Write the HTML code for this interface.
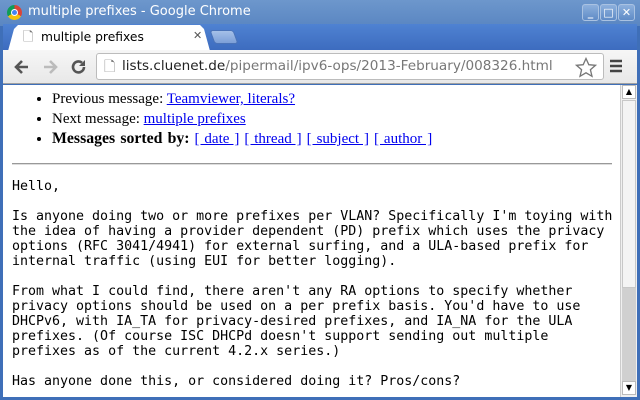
<!DOCTYPE html>
<html><head><style>
*{margin:0;padding:0;box-sizing:border-box}
body{width:640px;height:400px;overflow:hidden;background:#3f6fb8;position:relative;font-family:"DejaVu Sans","Liberation Sans",sans-serif}
.title{position:absolute;left:0;top:0;width:640px;height:26px;background:linear-gradient(#6d97cc,#5a86c2);}
.title span{position:absolute;left:28px;top:4px;color:#fff;font-size:13px}
.logo{position:absolute;left:7px;top:5px;width:15px;height:15px;border-radius:50%;background:conic-gradient(#db4437 0 120deg,#f4c20d 120deg 240deg,#0f9d58 240deg 360deg)}
.logo:after{content:"";position:absolute;left:4px;top:4px;width:7px;height:7px;border-radius:50%;background:#4285f4;border:1px solid #fff;box-sizing:border-box}
.wb{position:absolute;top:4px;width:17px;height:17px;border:1px solid #a9c2e2;border-radius:3px;background:linear-gradient(#8db0dd,#5f8bc6);color:#fff;font-size:11px;text-align:center;line-height:15px;font-weight:bold}
.strip{position:absolute;left:3px;top:24px;width:634px;height:26px;background:linear-gradient(#4f82d2,#3d6cbf)}
.tab{position:absolute;left:8px;top:25px;width:202px;height:26px;background:#fff;border-radius:4px 4px 0 0;clip-path:polygon(0 100%,6px 4px,10px 0,192px 0,196px 4px,202px 100%)}
.tab span{position:absolute;left:33px;top:5px;font-size:12.3px;color:#000}
.tab .x{left:185px;top:4px;font-size:11px;color:#555;font-weight:bold}
.newtab{position:absolute;left:212px;top:30px;width:24px;height:14px;background:linear-gradient(#a5c0e8,#7c9fd8);border:1px solid #4a73b8;border-radius:3px;transform:skewX(20deg)}
.tool{position:absolute;left:3px;top:50px;width:634px;height:34px;background:linear-gradient(#f6f6f6,#e8e8e8);border-bottom:1px solid #a0a0a0}
.omni{position:absolute;left:96px;top:53px;width:508px;height:27px;background:#fff;border:1px solid #bcbcbc;border-radius:3px}
.omni span{position:absolute;left:25px;top:4px;font-size:13.6px;color:#222;white-space:nowrap}
.omni span i{font-style:normal;color:#777}
.content{position:absolute;left:3px;top:85px;width:617px;height:312px;background:#fff;overflow:hidden}
ul{position:absolute;left:33px;top:4px;font-family:"Liberation Serif",serif;font-size:15px;line-height:20px;list-style:disc;padding-left:16px}
ul b{font-size:15.8px}
li.s{word-spacing:1.2px}
a{color:#00e;text-decoration:underline}
hr{position:absolute;left:9px;top:78px;width:600px;border:0;border-top:1px solid #999;border-bottom:1px solid #ddd}
pre{position:absolute;left:9px;top:94px;font-family:"DejaVu Sans Mono",monospace;font-size:13.3px;line-height:15px;color:#000}
.sb{position:absolute;left:620px;top:85px;width:17px;height:312px;background:#f0f0f0;border-left:1px solid #ccc}
.thumb{position:absolute;left:1px;top:15px;width:14px;height:188px;background:#f4f4f4;border:1px solid #c8c8c8}
.trk{position:absolute;left:1px;top:203px;width:14px;height:93px;background:#d0d0d0}
.ar{position:absolute;left:1px;width:14px;height:14px;background:#fff;border:1px solid #bbb;font-size:8px;text-align:center;line-height:12px}
</style></head><body>
<div class="title"><div class="logo"></div><span>multiple prefixes - Google Chrome</span>
<div class="wb" style="left:582px">_</div><div class="wb" style="left:600px">□</div><div class="wb" style="left:618px">✕</div></div>
<div class="strip"></div>
<div class="tab"><span style="left:15px;top:3px;color:#777;font-size:13px">🗋</span><span>multiple prefixes</span><span class="x">✕</span></div>
<div class="newtab"></div>
<div class="tool">
<svg style="position:absolute;left:10px;top:8px" width="18" height="18"><path d="M15 9H4M9 3L3 9l6 6" stroke="#555" stroke-width="2.6" fill="none"/></svg>
<svg style="position:absolute;left:38px;top:8px" width="18" height="18"><path d="M3 9h11M9 3l6 6-6 6" stroke="#bbb" stroke-width="2.6" fill="none"/></svg>
<svg style="position:absolute;left:67px;top:8px" width="18" height="18"><path d="M14 9a5.5 5.5 0 1 1-2-4.3" stroke="#555" stroke-width="2.6" fill="none"/><path d="M15 2v6h-6z" fill="#555"/></svg>
<svg style="position:absolute;left:606px;top:8px" width="14" height="16"><path d="M1 3h12M1 8h12M1 13h12" stroke="#444" stroke-width="2.4"/></svg>
</div>
<div class="omni"><span style="left:7px;top:2px;color:#777;font-size:14px">🗋</span><span>lists.cluenet.de<i>/pipermail/ipv6-ops/2013-February/008326.html</i></span>
<svg style="position:absolute;left:478px;top:3px" width="22" height="21"><path d="M11 1.5l2.8 6.2 6.7.6-5.1 4.4 1.6 6.6L11 15.8l-6 3.5 1.6-6.6L1.5 8.3l6.7-.6z" stroke="#777" stroke-width="1.3" fill="none"/></svg></div>
<div class="content">
<ul><li>Previous message: <a>Teamviewer, literals?</a></li>
<li>Next message: <a>multiple prefixes</a></li>
<li class="s"><b>Messages sorted by:</b> <a>[ date ]</a> <a>[ thread ]</a> <a>[ subject ]</a> <a>[ author ]</a></li></ul>
<hr>
<pre>Hello,

Is anyone doing two or more prefixes per VLAN? Specifically I'm toying with
the idea of having a provider dependent (PD) prefix which uses the privacy
options (RFC 3041/4941) for external surfing, and a ULA-based prefix for
internal traffic (using EUI for better logging).

From what I could find, there aren't any RA options to specify whether
privacy options should be used on a per prefix basis. You'd have to use
DHCPv6, with IA_TA for privacy-desired prefixes, and IA_NA for the ULA
prefixes. (Of course ISC DHCPd doesn't support sending out multiple
prefixes as of the current 4.2.x series.)

Has anyone done this, or considered doing it? Pros/cons?</pre>
</div>
<div class="sb"><div class="ar" style="top:0">▲</div><div class="thumb"></div><div class="trk"></div><div class="ar" style="top:296px">▼</div></div>
</body></html>
